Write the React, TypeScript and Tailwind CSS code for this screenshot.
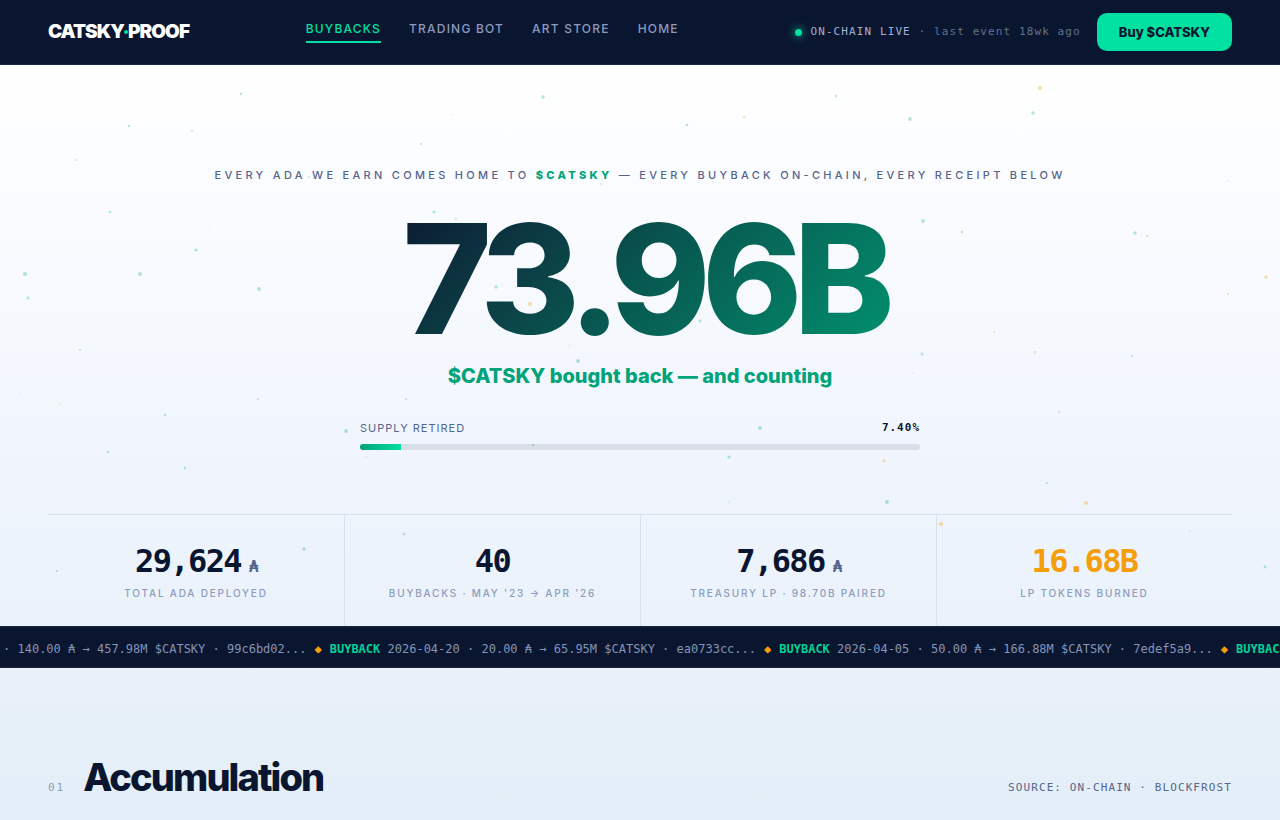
import React from 'react';

interface NavItem {
  label: string;
  active?: boolean;
}

interface Stat {
  value: string;
  unit?: string;
  label: string;
  accent?: boolean;
}

interface Buyback {
  date?: string;
  ada: string;
  tokens: string;
  tx: string;
}

type Dot = [x: number, y: number, r: number, tone: 'g' | 'a', opacity: number];

const NAV_ITEMS: NavItem[] = [
  { label: 'Buybacks', active: true },
  { label: 'Trading Bot' },
  { label: 'Art Store' },
  { label: 'Home' },
];

const STATS: Stat[] = [
  { value: '29,624', unit: '₳', label: 'Total ADA deployed' },
  { value: '40', label: "Buybacks · May '23 → Apr '26" },
  { value: '7,686', unit: '₳', label: 'Treasury LP · 98.70B paired' },
  { value: '16.68B', label: 'LP tokens burned', accent: true },
];

const BUYBACKS: Buyback[] = [
  { ada: '140.00', tokens: '457.98M', tx: '99c6bd02' },
  { date: '2026-04-20', ada: '20.00', tokens: '65.95M', tx: 'ea0733cc' },
  { date: '2026-04-05', ada: '50.00', tokens: '166.88M', tx: '7edef5a9' },
];

const SUPPLY_RETIRED = 7.4;

// x, y are relative to the hero's top-left corner
const DOTS: Dot[] = [
  [241, 29, 1.2, 'g', 0.28], [543, 32, 1.7, 'g', 0.3], [129, 61, 1.3, 'g', 0.28],
  [192, 66, 1, 'g', 0.28], [76, 95, 0.9, 'g', 0.28], [451, 50, 0.7, 'g', 0.2],
  [421, 79, 1.1, 'g', 0.28], [687, 60, 1.3, 'g', 0.3], [744, 52, 1.3, 'a', 0.3],
  [836, 31, 1.3, 'g', 0.25], [910, 54, 1.9, 'g', 0.28], [1033, 48, 1.7, 'g', 0.28],
  [1040, 23, 2.2, 'a', 0.3], [1228, 116, 0.8, 'a', 0.25], [309, 112, 1, 'g', 0.25],
  [601, 119, 0.8, 'g', 0.28], [110, 147, 1.3, 'g', 0.28], [210, 162, 0.6, 'g', 0.25],
  [196, 185, 1.6, 'g', 0.28], [25, 209, 2.1, 'g', 0.28], [140, 209, 2.1, 'g', 0.28],
  [28, 233, 1.4, 'g', 0.28], [259, 224, 1.9, 'g', 0.3], [80, 285, 1.1, 'g', 0.28],
  [20, 329, 0.6, 'g', 0.25], [61, 339, 0.8, 'a', 0.28], [165, 350, 1.3, 'g', 0.28],
  [258, 334, 1.1, 'g', 0.28], [346, 366, 1.9, 'g', 0.3], [108, 387, 1.2, 'g', 0.28],
  [185, 403, 1.3, 'g', 0.28], [434, 147, 1.5, 'g', 0.3], [456, 154, 1.1, 'g', 0.28],
  [496, 222, 1.7, 'g', 0.3], [530, 239, 2, 'a', 0.35], [569, 281, 0.8, 'a', 0.28],
  [578, 296, 1.9, 'g', 0.3], [406, 334, 1.1, 'g', 0.28], [776, 195, 0.8, 'g', 0.2],
  [700, 256, 1.5, 'g', 0.28], [760, 363, 2, 'g', 0.3], [533, 380, 1.1, 'g', 0.35],
  [729, 392, 1.6, 'g', 0.3], [884, 396, 1.5, 'a', 0.35], [887, 437, 1.9, 'g', 0.3],
  [729, 437, 0.8, 'g', 0.2], [366, 392, 0.8, 'g', 0.2], [923, 156, 1.9, 'g', 0.28],
  [962, 167, 1.2, 'g', 0.28], [1135, 168, 1.7, 'g', 0.28], [1147, 171, 1.1, 'g', 0.28],
  [1266, 212, 1.7, 'a', 0.33], [1228, 229, 1, 'a', 0.33], [994, 267, 1, 'a', 0.3],
  [1035, 287, 1.3, 'a', 0.3], [922, 289, 1.4, 'g', 0.28], [1132, 291, 1.1, 'g', 0.3],
  [913, 308, 0.7, 'g', 0.2], [1059, 347, 1, 'g', 0.25], [1047, 418, 1, 'g', 0.28],
  [1086, 438, 2.1, 'a', 0.35], [941, 459, 2.1, 'a', 0.35], [1190, 466, 0.8, 'g', 0.28],
  [1265, 502, 1.4, 'g', 0.3], [304, 484, 1.7, 'g', 0.3], [404, 469, 1.3, 'g', 0.28],
  [57, 506, 1.1, 'g', 0.28],
];

const Header: React.FC = () => (
  <header className="border-b border-[#1b2740] bg-[#0a1630]">
    <div className="flex h-16 items-center justify-between px-12">
      <a href="#" className="flex items-center text-[19px] font-black tracking-tighter text-white">
        CATSKY
        <span className="size-1 rounded-full bg-[#00e0a0]"></span>
        PROOF
      </a>
      <nav className="flex gap-7 text-xs font-medium tracking-widest uppercase">
        {NAV_ITEMS.map((item) => (
          <a
            key={item.label}
            href="#"
            className={`border-b-2 pb-1 leading-4 ${
              item.active ? 'border-[#00e0a0] text-[#00e0a0]' : 'border-transparent text-[#8d9abf]'
            }`}
          >
            {item.label}
          </a>
        ))}
      </nav>
      <div className="flex items-center gap-4">
        <div className="flex items-center gap-2 font-['DejaVu_Sans_Mono',monospace] text-[11px] tracking-widest text-[#a3b0cf]">
          <span className="size-[7px] rounded-full bg-[#00e0a0] shadow-[0_0_8px_#00e0a0]"></span>
          <span>
            ON-CHAIN LIVE <span className="text-[#65718f]">· last event 18wk ago</span>
          </span>
        </div>
        <button className="rounded-[10px] bg-[#00e0a0] px-[22px] py-[9px] text-[13px] leading-5 font-extrabold text-[#0a1630]">
          Buy $CATSKY
        </button>
      </div>
    </div>
  </header>
);

const Particles: React.FC = () => (
  <svg className="pointer-events-none absolute inset-0 size-full" aria-hidden="true">
    {DOTS.map(([x, y, r, tone, opacity]) => (
      <circle key={`${x}-${y}`} cx={x} cy={y} r={r} fill={tone === 'g' ? '#00a878' : '#f59e0b'} opacity={opacity} />
    ))}
  </svg>
);

const StatCell: React.FC<{ stat: Stat }> = ({ stat }) => (
  <div className="flex flex-col items-center border-l border-[#d9e0ea] pt-7 pb-[25px] first:border-l-0">
    <p
      className={`font-['DejaVu_Sans_Mono',monospace] text-[32px] leading-9 font-bold tracking-tighter ${
        stat.accent ? 'text-[#f59e0b]' : 'text-[#0a1630]'
      }`}
    >
      {stat.value}
      {stat.unit && <span className="ml-2 text-base text-[#56658c]">{stat.unit}</span>}
    </p>
    <p className="mt-1.5 text-[10px] leading-4 font-medium tracking-[0.18em] text-[#8d9cbd] uppercase">{stat.label}</p>
  </div>
);

const Hero: React.FC = () => (
  <section className="relative px-12 pt-[100px]">
    <Particles />
    <div className="relative flex flex-col items-center">
      <p className="text-[11px] leading-5 font-medium tracking-[0.3em] text-[#56658c] uppercase">
        Every ADA we earn comes home to <strong className="font-extrabold text-[#00a37a]">$CATSKY</strong> — every
        buyback on-chain, every receipt below
      </p>
      <h1 className="mt-[18px] bg-linear-135 from-[#0a1630] via-[#075850] to-[#00936f] bg-clip-text pr-2 pl-4 text-[152px] leading-[152px] font-extrabold tracking-[-9px] text-transparent">
        73.96B
      </h1>
      <p className="mt-[5px] text-xl leading-8 font-extrabold text-[#00a37a]">$CATSKY bought back — and counting</p>
      <div className="mt-7 w-full max-w-[560px]">
        <div className="flex items-center justify-between text-[11px] leading-4">
          <span className="tracking-[1px] text-[#56658c] uppercase">Supply retired</span>
          <span className="font-['DejaVu_Sans_Mono',monospace] font-bold tracking-[1px] text-[#0a1630]">
            {SUPPLY_RETIRED.toFixed(2)}%
          </span>
        </div>
        <div className="mt-2 h-1.5 overflow-hidden rounded-full bg-[#0a1630]/10">
          <div
            className="h-full bg-linear-90 from-[#00a37a] to-[#00e0a0]"
            style={{ width: `${SUPPLY_RETIRED}%` }}
          ></div>
        </div>
      </div>
    </div>
    <div className="relative mt-16 grid grid-cols-4 border-t border-[#d9e0ea]">
      {STATS.map((stat) => (
        <StatCell key={stat.label} stat={stat} />
      ))}
    </div>
  </section>
);

const Ticker: React.FC = () => (
  <div className="overflow-hidden border-y border-[#1b2740] bg-[#0a1630] pt-3.5 pb-2.5 pl-[3px]">
    <div className="flex w-max gap-2 font-['DejaVu_Sans_Mono',monospace] text-xs leading-4 text-[#8593b5]">
      {BUYBACKS.map((item) => (
        <React.Fragment key={item.tx}>
          <span>
            {item.date && <b className="text-[#00d196]">BUYBACK</b>}
            {item.date && ` ${item.date} `}· {item.ada} ₳ → {item.tokens} $CATSKY · {item.tx}...
          </span>
          <span className="text-[#f59e0b]">◆</span>
        </React.Fragment>
      ))}
      <b className="text-[#00d196]">BUYBACK</b>
    </div>
  </div>
);

const Accumulation: React.FC = () => (
  <section className="flex items-baseline justify-between px-12 pt-[85px]">
    <div className="flex items-baseline gap-[18px]">
      <span className="font-['DejaVu_Sans_Mono',monospace] text-[11px] tracking-[2px] text-[#8d9cbd]">01</span>
      <h2 className="text-[38px] leading-12 font-extrabold tracking-tighter text-[#0a1630]">Accumulation</h2>
    </div>
    <p className="font-['DejaVu_Sans_Mono',monospace] text-[11px] tracking-widest text-[#56658c] uppercase">
      Source: on-chain · Blockfrost
    </p>
  </section>
);

const App: React.FC = () => (
  <div className="min-h-screen overflow-hidden bg-linear-to-b from-white from-8% via-[#f0f5fd] via-57% to-[#e3eef8] font-['Inter',sans-serif]">
    <Header />
    <main>
      <Hero />
      <Ticker />
      <Accumulation />
    </main>
  </div>
);

export default App;
